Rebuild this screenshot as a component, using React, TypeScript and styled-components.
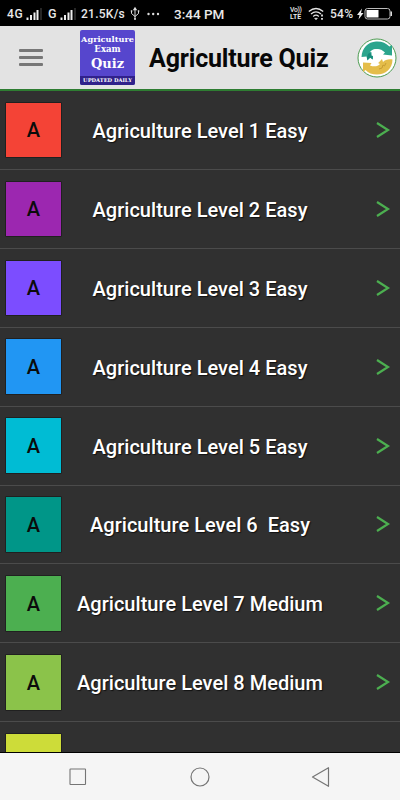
import React from "react";
import styled, { createGlobalStyle } from "styled-components";

const GlobalStyle = createGlobalStyle`
  * { box-sizing: border-box; }
  body { margin: 0; background: #303030; font-family: Roboto, sans-serif; }
`;

const Screen = styled.div`
  display: flex;
  flex-direction: column;
  width: 400px;
  height: 800px;
  overflow: hidden;
  background: #303030;
`;

const StatusBar = styled.div`
  display: flex;
  align-items: center;
  flex: none;
  height: 26px;
  padding: 2px 0 0 7px;
  background: #000;
  color: #e8e8e8;
`;

const StatusText = styled.span<{ $w: number; $indent?: number; $size?: number; $spacing?: number }>`
  flex: none;
  width: ${(p) => p.$w}px;
  padding-left: ${(p) => p.$indent ?? 0}px;
  font-size: ${(p) => p.$size ?? 12}px;
  font-weight: 500;
  letter-spacing: ${(p) => p.$spacing ?? 0}px;
  line-height: 24px;
  white-space: nowrap;
`;

const Glyph = styled.svg`
  display: block;
  flex: none;
`;

const Header = styled.header`
  display: flex;
  align-items: center;
  flex: none;
  height: 65px;
  padding: 0 3px 0 19px;
  background: #e3e3e3;
  border-bottom: 2px solid #2e7d32;
`;

const MenuButton = styled.button`
  display: flex;
  flex-direction: column;
  gap: 4px;
  width: 24px;
  margin: 0 37px 0 0;
  padding: 0;
  border: 0;
  background: none;
`;

const MenuLine = styled.span`
  height: 3px;
  border-radius: 1px;
  background: #777;
`;

const Badge = styled.div`
  display: flex;
  flex-direction: column;
  align-items: center;
  width: 55px;
  height: 55px;
  margin-right: 14px;
  margin-top: -1px;
  padding-top: 4px;
  overflow: hidden;
  border-radius: 2px;
  background: #5646cd;
  color: #fff;
  font-family: "DejaVu Serif", serif;
  font-weight: 700;
  white-space: nowrap;
`;

const BadgeLine = styled.span<{ $size: number; $height: number; $spacing?: number }>`
  font-size: ${(p) => p.$size}px;
  line-height: ${(p) => p.$height}px;
  letter-spacing: ${(p) => p.$spacing ?? 0}px;
`;

const BadgeFooter = styled.span`
  width: 100%;
  margin-top: auto;
  background: #30218b;
  font-size: 5.2px;
  line-height: 9px;
  text-align: center;
`;

const Title = styled.h1`
  flex: 1;
  margin: 3px 0 0;
  font-size: 25px;
  font-weight: 700;
  line-height: 30px;
  letter-spacing: -0.17px;
  color: #080808;
  white-space: nowrap;
`;

const List = styled.main`
  flex: 1;
  min-height: 0;
  overflow: hidden;
  border-bottom: 1px solid #000;
`;

const Row = styled.div`
  display: grid;
  grid-template-columns: 61px 1fr 61px;
  align-items: center;
  height: 78.92px;
  border-bottom: 1px solid #4b4b4b;
`;

const Tile = styled.div<{ $color: string }>`
  display: flex;
  align-items: center;
  justify-content: center;
  width: 55px;
  height: 54.5px;
  margin-left: 6px;
  padding-top: 1px;
  background: ${(p) => p.$color};
  box-shadow: 0 0 0 0.5px #101010;
  color: #0b0b0b;
  font-size: 20px;
  font-weight: 500;
`;

const Label = styled.span`
  padding-top: 2px;
  font-size: 20px;
  font-weight: 500;
  line-height: 24px;
  letter-spacing: 0.03px;
  color: #fff;
  text-align: center;
  text-shadow: 1px 1px 1px #111;
  white-space: pre;
`;

const NavBar = styled.nav`
  display: flex;
  align-items: center;
  justify-content: space-between;
  flex: none;
  height: 47px;
  padding: 0 68px 0 67px;
  background: #f5f5f5;
`;

const levels = [
  { label: "Agriculture Level 1 Easy", color: "#f44336" },
  { label: "Agriculture Level 2 Easy", color: "#9c27b0" },
  { label: "Agriculture Level 3 Easy", color: "#7c4dff" },
  { label: "Agriculture Level 4 Easy", color: "#2196f3" },
  { label: "Agriculture Level 5 Easy", color: "#00bcd4" },
  { label: "Agriculture Level 6  Easy", color: "#009688" },
  { label: "Agriculture Level 7 Medium", color: "#4caf50" },
  { label: "Agriculture Level 8 Medium", color: "#8bc34a" },
];

const Signal = () => (
  <Glyph width="17" height="14" viewBox="0 0 17 14">
    <path d="M.5 10.500h2V13h-2zM4 8h2v5H4zM7.500 5.500h2V13h-2zM10.500 3h2v10h-2z" fill="#eee" />
    <path d="M14 1h2v12h-2z" fill="#262626" />
  </Glyph>
);

const Usb = () => (
  <Glyph width="16" height="16" viewBox="0 0 16 16" fill="none" stroke="#ddd">
    <path d="M6 2v11M2.500 5v2.500L6 10.500M9.500 5v2.500L6 10.500" />
    <path d="M5 3.500 6 2l1 1.500zM5 13h2M1.800 5h1.500M8.800 5h1.500" strokeWidth="1.300" />
  </Glyph>
);

const Volte = styled.div`
  display: flex;
  flex-direction: column;
  width: 18px;
  margin-top: -1px;
  font-size: 6.8px;
  font-weight: 700;
  line-height: 8px;
`;

const VolteTop = styled.span`
  font-weight: 500;
  letter-spacing: -0.3px;
  margin-bottom: -1px;
`;

const Wifi = () => (
  <Glyph width="22" height="14" viewBox="0 0 22 14" fill="none" stroke="#e5e5e5" strokeWidth="1.300">
    <path d="M.8 4.500Q8-1.500 15.200 4.500M3 7Q8 2.800 13 7M5.200 9.400Q8 7 10.800 9.400" />
    <path d="M6.700 11.300h2.600L8 12.700z" fill="#e5e5e5" strokeWidth=".8" />
    <path d="M14 7.500v2M14 11v1.800" strokeWidth="1.800" />
  </Glyph>
);

const Battery = () => (
  <Glyph width="37" height="14" viewBox="0 0 37 14">
    <path d="M5 1.500 0 8h2.500L1.500 12.500 6.500 6H4z" fill="#eee" />
    <rect x="8" y="1.500" width="25" height="10.500" rx="2.500" fill="none" stroke="#bbb" />
    <rect x="9.500" y="3" width="12" height="7.500" fill="#fff" />
    <path d="M33.500 4.500h1.500v4.500h-1.500z" fill="#ddd" />
  </Glyph>
);

const Emblem = () => (
  <Glyph width="40" height="40" viewBox="0 0 40 40">
    <circle cx="20" cy="20" r="19" fill="#fff" stroke="#4b9b50" />
    <path
      d="M4.500 19C5 10 11 4 19 3.500c6-.3 10 1.500 13.500 5L35 7v10.500l-9-1 2-2c-3-3-6-4-9-3.500-3 .2-5 1.500-6 3l3 .5v7l-2.500-2-3 3-1-4z"
      fill="#2ba58d"
    />
    <path
      d="M35.500 21.500c0 9-7 15-15.500 15-5 0-8.500-1.500-11.500-4.500L6 34V24.500l8.500.5-1.500 2.500c4 1.500 8 1 10-1.500l-2-1 4-4 1 3c2-2 5-3 9.500-2.500z"
      fill="#e4bd4a"
    />
    <path d="m12 15 3.500 1v5.500L13 19.500l-3 2.500c0-3 0-5 2-7z" fill="#178b7b" />
    <path d="M14.500 13c3-2.500 8-2.500 11.500 1l-3 2.500 1 5-2.500 3h-3l-1-6-3-1z" fill="#fff" />
    <path d="m22 31 3-1 1-3 1.500 1 1.500-3" fill="none" stroke="#c79d31" />
  </Glyph>
);

const Chevron = () => (
  <Glyph width="16" height="18" viewBox="0 0 16 18">
    <path d="M2 2 13 9 2 16" fill="none" stroke="#4caf50" strokeWidth="2.200" />
  </Glyph>
);

const ArrowCell = styled.span`
  display: flex;
  justify-content: flex-end;
  padding-right: 9px;
`;

export default function App() {
  return (
    <Screen>
      <GlobalStyle />
      <StatusBar>
        <StatusText $w={19} $spacing={0.6}>4G</StatusText>
        <Signal />
        <StatusText $w={17} $indent={5} $size={12.5}>G</StatusText>
        <Signal />
        <StatusText $w={52} $indent={4} $spacing={0.25}>21.5K/s</StatusText>
        <Usb />
        <Glyph width="29" height="4" viewBox="0 0 29 4" fill="#ddd">
          <circle cx="3.500" cy="2" r="1.200" />
          <circle cx="8.200" cy="2" r="1.200" />
          <circle cx="13" cy="2" r="1.200" />
        </Glyph>
        <StatusText $w={116} $indent={-0} $size={13.5}>3:44 PM</StatusText>
        <Volte>
          <VolteTop>Vo))</VolteTop>
          <span>LTE</span>
        </Volte>
        <Wifi />
        <StatusText $w={27} $spacing={0.3}>54%</StatusText>
        <Battery />
      </StatusBar>
      <Header>
        <MenuButton aria-label="Menu">
          <MenuLine />
          <MenuLine />
          <MenuLine />
        </MenuButton>
        <Badge>
          <BadgeLine $size={8.2} $height={10}>Agriculture</BadgeLine>
          <BadgeLine $size={8.6} $height={11}>Exam</BadgeLine>
          <BadgeLine $size={13} $height={17}>Quiz</BadgeLine>
          <BadgeFooter>UPDATED DAILY</BadgeFooter>
        </Badge>
        <Title>Agriculture Quiz</Title>
        <Emblem />
      </Header>
      <List>
        {levels.map((level) => (
          <Row key={level.label}>
            <Tile $color={level.color}>A</Tile>
            <Label>{level.label}</Label>
            <ArrowCell>
              <Chevron />
            </ArrowCell>
          </Row>
        ))}
        <Row>
          <Tile $color="#cddc39" />
        </Row>
      </List>
      <NavBar>
        <Glyph width="22" height="22" viewBox="0 0 22 22" fill="none" stroke="#757575">
          <rect x="3" y="3" width="15.500" height="15.500" rx=".5" strokeWidth="1.100" />
        </Glyph>
        <Glyph width="22" height="22" viewBox="0 0 22 22" fill="none" stroke="#757575">
          <circle cx="11" cy="11" r="9" strokeWidth="1.200" />
        </Glyph>
        <Glyph width="22" height="22" viewBox="0 0 22 22" fill="none" stroke="#757575">
          <path d="M2.500 11 18.500 1.700v18.600z" strokeWidth="1.200" strokeLinejoin="round" />
        </Glyph>
      </NavBar>
    </Screen>
  );
}
